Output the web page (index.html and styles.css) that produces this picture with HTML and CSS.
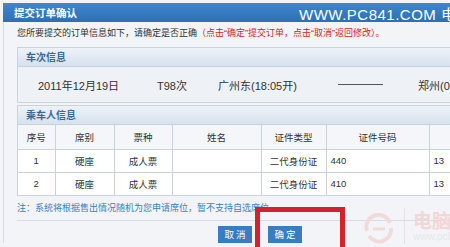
FILE: index.html
```html
<!DOCTYPE html>
<html lang="zh-CN">
<head>
    <meta charset="UTF-8">
    <meta name="viewport" content="width=device-width, initial-scale=1.0">
    <title>提交订单确认</title>
    <link rel="stylesheet" href="styles.css">
</head>
<body>
    <div class="page">
        <div class="titlebar">
            <span class="title">提交订单确认</span>
            <span class="site">WWW.PC841.COM 电脑百事网</span>
        </div>
        <div class="panel">
            <p class="intro">您所要提交的订单信息如下，请确定是否正确<span class="warn">（点击“确定”提交订单，点击“取消”返回修改）。</span></p>
            <div class="box">
                <div class="box-head">车次信息</div>
                <div class="train">
                    <span class="date">2011年12月19日</span>
                    <span class="code">T98次</span>
                    <span class="from">广州东(18:05开)</span>
                    <span class="dash"></span>
                    <span class="to">郑州(06:35到)</span>
                </div>
            </div>
            <div class="box">
                <div class="box-head">乘车人信息</div>
                <table class="riders">
                    <colgroup>
                        <col class="c-no">
                        <col class="c-seat">
                        <col class="c-type">
                        <col class="c-name">
                        <col class="c-idtype">
                        <col class="c-id">
                        <col>
                    </colgroup>
                    <thead>
                        <tr><th>序号</th><th>席别</th><th>票种</th><th>姓名</th><th>证件类型</th><th>证件号码</th><th>手机号码</th></tr>
                    </thead>
                    <tbody>
                        <tr><td>1</td><td>硬座</td><td>成人票</td><td></td><td>二代身份证</td><td class="left">440</td><td class="left">13</td></tr>
                        <tr><td>2</td><td>硬座</td><td>成人票</td><td></td><td>二代身份证</td><td class="left">410</td><td class="left">13</td></tr>
                    </tbody>
                </table>
            </div>
            <p class="note">注：系统将根据售出情况随机为您申请席位，暂不支持自选席位。</p>
            <div class="actions">
                <button class="btn">取 消</button>
                <button class="btn">确 定</button>
            </div>
        </div>

        <div class="watermark">
            <svg class="wm-logo" width="34" height="32" viewBox="0 0 34 32">
                <path d="M5 18 A12 12 0 0 1 28 10" fill="none" stroke="#f3dada" stroke-width="4"/>
                <path d="M29 15 A12 12 0 0 1 7 23" fill="none" stroke="#f3dada" stroke-width="4"/>
                <path d="M11 16 h12" stroke="#f3dada" stroke-width="3"/>
            </svg>
            <span class="wm-bar"></span>
            <span class="wm-text"><b>电脑百事</b><i>www.pc841.com</i></span>
        </div>
        <div class="highlight"></div>
    </div>
</body>
</html>
```

FILE: styles.css
```css
* {
    margin: 0;
    padding: 0;
    box-sizing: border-box;
}
body {
    font-family: 'Liberation Sans', 'Noto Sans CJK SC', sans-serif;
    background: #f2f4f7;
    color: #333;
    width: 450px;
    height: 247px;
    overflow: hidden;
}
.page {
    position: relative;
    width: 600px;
    padding-top: 3px;
    background: #f2f4f7;
}
.titlebar {
    margin-left: 3px;
    width: 447px;
    height: 19px;
    background: linear-gradient(#3f86cc, #2c6fb4);
    display: flex;
    align-items: center;
    overflow: hidden;
    white-space: nowrap;
}
.title {
    flex-shrink: 0;
    width: 296px;
    padding-left: 11px;
    color: #fff;
    font-size: 10.5px;
    font-weight: bold;
}
.site {
    flex-shrink: 0;
    color: #fff;
    font-size: 15px;
    letter-spacing: 0.5px;
    padding-top: 2px;
}
.panel {
    margin-left: 3px;
    border-left: 1px solid #d6dce3;
    padding-left: 13px;
    width: 560px;
}
.intro {
    height: 25px;
    line-height: 23px;
    font-size: 9px;
    color: #333;
    white-space: nowrap;
}
.warn {
    color: #d21f1f;
}
.box {
    border: 1px solid #c9d3de;
    background: #fff;
    margin-bottom: 2px;
}
.box-head {
    height: 19px;
    line-height: 19px;
    padding-left: 8px;
    font-size: 10px;
    font-weight: bold;
    color: #3a6a9c;
    background: linear-gradient(#edf2f8, #d6e2ee);
    border-bottom: 1px solid #c9d3de;
}
.train {
    height: 35px;
    background: #eef1f5;
    display: flex;
    align-items: center;
    font-size: 11px;
    color: #333;
    white-space: nowrap;
}
.date {
    margin-left: 20px;
    width: 119px;
}
.code {
    width: 61px;
}
.from {
    width: 120px;
}
.dash {
    width: 45px;
    height: 1px;
    background: #555;
    margin-right: 35px;
}
.riders {
    width: 100%;
    border-collapse: collapse;
    border-style: hidden;
    font-size: 9.5px;
    background: #fff;
}
.c-no { width: 37px; }
.c-seat { width: 59px; }
.c-type { width: 58px; }
.c-name { width: 89px; }
.c-idtype { width: 65px; }
.c-id { width: 103px; }
.riders th,
.riders td {
    border: 1px solid #c9d3de;
    text-align: center;
    font-weight: normal;
    color: #333;
    white-space: nowrap;
}
.riders th {
    height: 24px;
    background: #f4f6f9;
}
.riders td {
    height: 23px;
}
.riders td.left {
    text-align: left;
    padding-left: 4px;
}
.note {
    height: 23px;
    line-height: 20px;
    font-size: 9px;
    color: #3a80c6;
    border-bottom: 1px solid #d8dde3;
}
.actions {
    display: flex;
    gap: 16px;
    padding: 5px 0 0 201px;
}
.btn {
    width: 34px;
    height: 17px;
    border: none;
    background: #3a7cc2;
    color: #fff;
    font-family: 'Noto Sans CJK SC', sans-serif;
    font-size: 9.5px;
    line-height: 17px;
}
.watermark {
    position: absolute;
    left: 362px;
    top: 207px;
    display: flex;
    align-items: center;
    gap: 8px;
}
.wm-logo {
    margin-top: 6px;
}
.wm-bar {
    width: 1px;
    height: 36px;
    background: #f0dede;
}
.wm-text {
    display: flex;
    flex-direction: column;
    color: #f3d6d6;
    line-height: 1;
}
.wm-text b {
    font-size: 19px;
    font-family: 'Noto Sans CJK SC', sans-serif;
}
.wm-text i {
    font-style: normal;
    font-size: 10px;
    color: #e6e8eb;
    margin-top: 3px;
}
.highlight {
    position: absolute;
    left: 255px;
    top: 207px;
    width: 90px;
    height: 60px;
    border: 5px solid #d3222c;
}
```
